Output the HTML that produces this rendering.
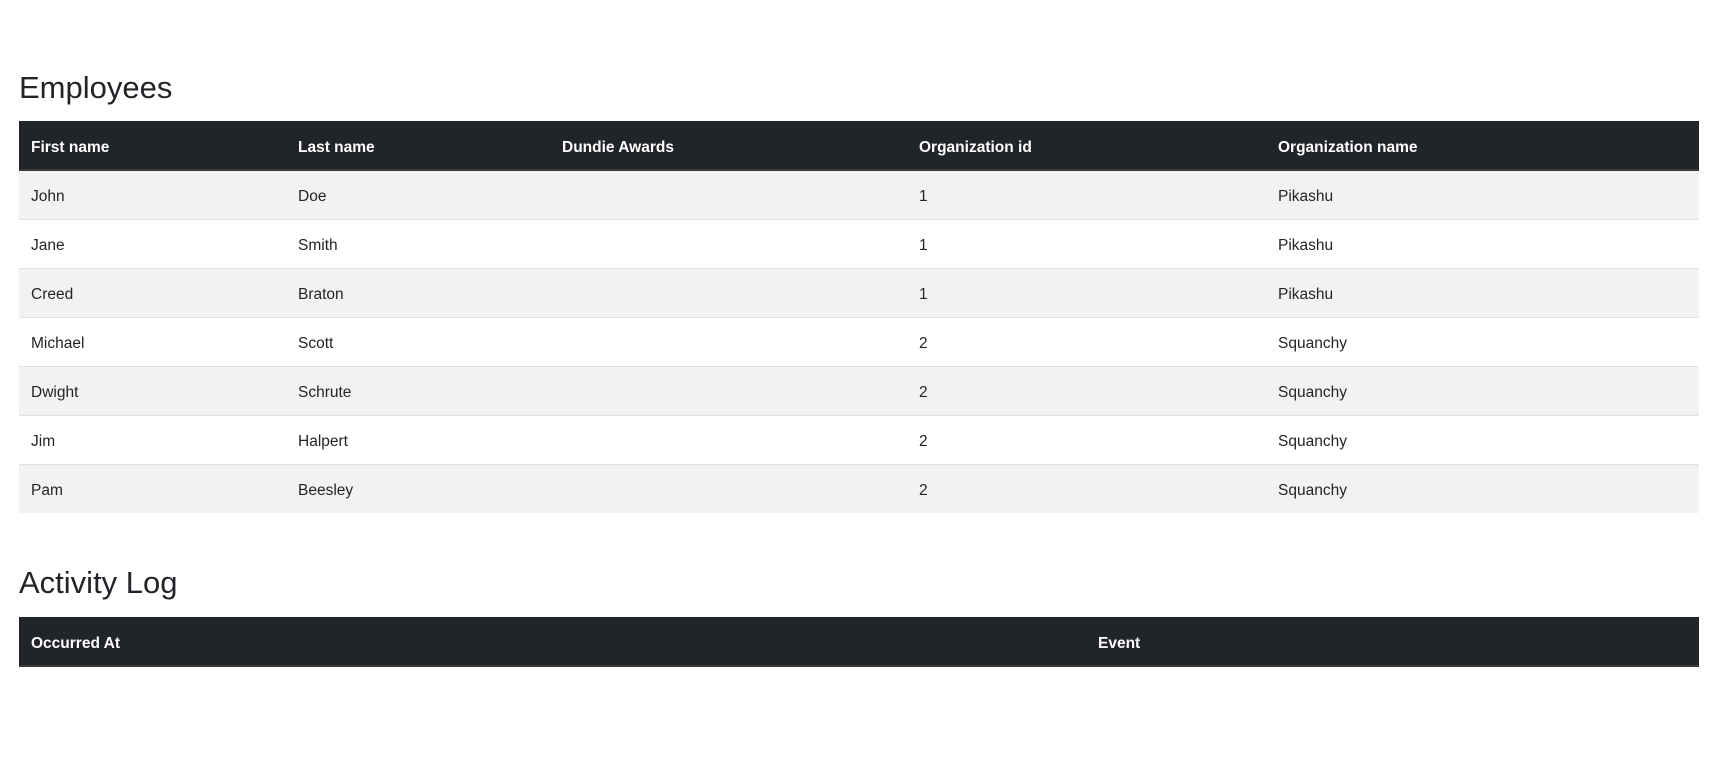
<!DOCTYPE html>
<html><head><style>
body{margin:0;background:#fff;font-family:"Liberation Sans",Arial,sans-serif;color:#212529;width:1713px;height:776px;overflow:hidden}
h2{position:absolute;left:19px;margin:0;font-weight:500;font-size:31px;line-height:40px}
table{position:absolute;left:19px;width:1680px;border-collapse:collapse;table-layout:fixed;font-size:15.5px}
th{background:#212529;color:#fff;text-align:left;font-weight:bold;height:49px;padding:5px 12px 0;border-bottom:2px solid #373b3e;box-sizing:border-box;font-size:15.5px}
td{height:49px;padding:5px 12px 0;border-bottom:1px solid #dee2e6;box-sizing:border-box}
tbody tr:nth-child(odd) td{background:#f2f2f2}
tbody tr:last-child td{border-bottom:none}
</style></head><body>
<h2 style="top:68px">Employees</h2>
<table style="top:121px">
<colgroup><col style="width:267px"><col style="width:264px"><col style="width:357px"><col style="width:359px"><col></colgroup>
<thead><tr><th>First name</th><th>Last name</th><th>Dundie Awards</th><th>Organization id</th><th>Organization name</th></tr></thead>
<tbody>
<tr><td>John</td><td>Doe</td><td></td><td>1</td><td>Pikashu</td></tr>
<tr><td>Jane</td><td>Smith</td><td></td><td>1</td><td>Pikashu</td></tr>
<tr><td>Creed</td><td>Braton</td><td></td><td>1</td><td>Pikashu</td></tr>
<tr><td>Michael</td><td>Scott</td><td></td><td>2</td><td>Squanchy</td></tr>
<tr><td>Dwight</td><td>Schrute</td><td></td><td>2</td><td>Squanchy</td></tr>
<tr><td>Jim</td><td>Halpert</td><td></td><td>2</td><td>Squanchy</td></tr>
<tr><td>Pam</td><td>Beesley</td><td></td><td>2</td><td>Squanchy</td></tr>
</tbody></table>
<h2 style="top:563px">Activity Log</h2>
<table style="top:617px">
<colgroup><col style="width:1067px"><col></colgroup>
<thead><tr><th>Occurred At</th><th>Event</th></tr></thead>
</table>
</body></html>
